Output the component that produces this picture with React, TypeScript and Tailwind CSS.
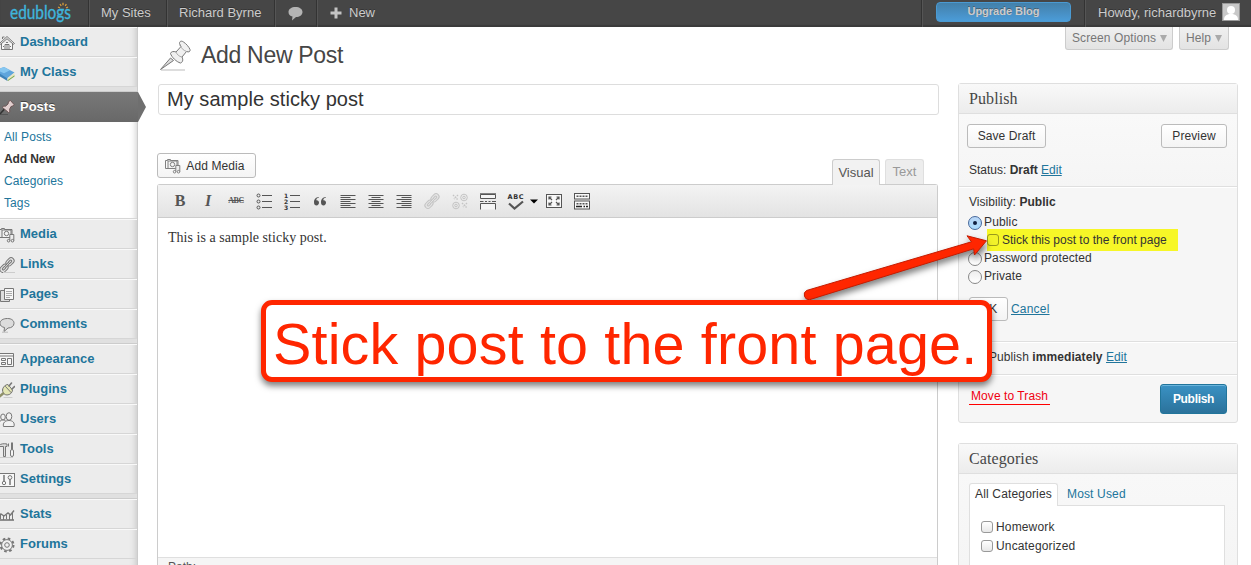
import type { ReactNode } from 'react';

type MenuIcon =
  | 'home'
  | 'book'
  | 'media'
  | 'link'
  | 'pages'
  | 'comment'
  | 'appearance'
  | 'plug'
  | 'users'
  | 'tools'
  | 'settings'
  | 'stats'
  | 'gear';

type MenuItem = { label: string; icon: MenuIcon };

const topMenu: MenuItem[] = [
  { label: 'Dashboard', icon: 'home' },
  { label: 'My Class', icon: 'book' },
];

const contentMenu: MenuItem[] = [
  { label: 'Media', icon: 'media' },
  { label: 'Links', icon: 'link' },
  { label: 'Pages', icon: 'pages' },
  { label: 'Comments', icon: 'comment' },
];

const adminMenu: MenuItem[] = [
  { label: 'Appearance', icon: 'appearance' },
  { label: 'Plugins', icon: 'plug' },
  { label: 'Users', icon: 'users' },
  { label: 'Tools', icon: 'tools' },
  { label: 'Settings', icon: 'settings' },
];

const extraMenu: MenuItem[] = [
  { label: 'Stats', icon: 'stats' },
  { label: 'Forums', icon: 'gear' },
];

const submenu = ['All Posts', 'Add New', 'Categories', 'Tags'];

function LinkShape() {
  return (
    <>
      <rect x="6.500" y="1.800" width="9" height="6" rx="3" transform="rotate(-45 11 4.800)" fill="#e4e4e4" />
      <rect x="0.500" y="8.300" width="9" height="6" rx="3" transform="rotate(-45 5 11.300)" fill="#e4e4e4" />
      <rect x="9" y="3.800" width="4" height="2" rx="1" transform="rotate(-45 11 4.800)" />
      <rect x="3" y="10.300" width="4" height="2" rx="1" transform="rotate(-45 5 11.300)" />
      <path d="M6 10.300l4-4.500" strokeWidth="2.400" />
      <path d="M6 10.300l4-4.500" stroke="#eee" strokeWidth="0.800" />
    </>
  );
}

function MediaShape() {
  return (
    <>
      <path d="M3.500 10.500h-3v-8h2v-1h3v1h7.500v6" />
      <rect x="3" y="3" width="9" height="7.500" fill="#f4f4f4" />
      <circle cx="7.500" cy="6.500" r="2.200" />
      <path d="M10.800 13.500V7.500h4v6" fill="#eee" />
      <circle cx="9.600" cy="13.700" r="1.300" />
      <circle cx="13.500" cy="13.700" r="1.300" />
    </>
  );
}

function SideIcon({ kind }: { kind: MenuIcon }) {
  const common = {
    width: 16,
    height: 16,
    viewBox: '0 0 16 16',
    fill: 'none',
    stroke: '#777',
    strokeWidth: 1,
    className: '-ml-px shrink-0',
  };
  switch (kind) {
    case 'home':
      return (
        <svg {...common}>
          <path d="M2.500 8v6.500h11V8" fill="#f7f7f7" />
          <path d="M.5 8.500L8 1.500l7.500 7-1.200.8L8 3.700 1.700 9.300z" fill="#eee" />
          <path d="M6 14V9.500h4V14M8 10v4M3.500 4V2h2" />
          <path d="M4 11.500h1M11 11.500h1M7 7.500h2" />
        </svg>
      );
    case 'book':
      return (
        <svg {...common} stroke="none">
          <path d="M0 6v5l8.500 5v-5z" fill="#3c82b8" />
          <path d="M0 4l5-2 10.500 5.500-7 6L0 8z" fill="#5fa5dc" />
          <path d="M1 3.500L5 2l6 3.200-6 3L0 6z" fill="#86c6f0" />
          <path d="M8.500 13l7-5.500v3l-7 5z" fill="#e9e6c4" />
          <path d="M8.500 15.200l7-5v1.300L9 16z" fill="#7aa94a" />
        </svg>
      );
    case 'media':
      return (
        <svg {...common}>
          <MediaShape />
        </svg>
      );
    case 'link':
      return (
        <svg {...common}>
          <LinkShape />
          <path d="M4 15.500h12" stroke="#ccc" />
        </svg>
      );
    case 'pages':
      return (
        <svg {...common}>
          <path d="M1.500 3.500h9v11h-9z" fill="#ddd" />
          <path d="M5.500 1.500h9v11h-9z" fill="#f7f7f7" />
          <path d="M7 4.500h6M7 6.500h6M7 8.500h6M7 10.500h4" stroke="#aaa" />
        </svg>
      );
    case 'comment':
      return (
        <svg {...common}>
          <path
            d="M8.500 1.500c4 0 6.500 2 6.500 4.800s-2.500 4.700-6 4.700L5 14.500l.5-4C3 10 1 8.800 1 6.300 1 3.500 4 1.500 8.500 1.500z"
            fill="#dcdcdc"
          />
          <path d="M3 15.200h6" stroke="#bbb" />
        </svg>
      );
    case 'appearance':
      return (
        <svg {...common}>
          <path d="M.5 1.500h14v13H.5z" fill="#f7f7f7" />
          <path d="M1 4h13" />
          <path d="M2.500 6.500h4v2h-4zM2.500 10.500h4v2h-4zM8.500 6.500h4v6h-4z" />
        </svg>
      );
    case 'plug':
      return (
        <svg {...common} strokeLinecap="round">
          <path d="M3.500 8c0-3 3-5.500 5.500-5.500L13.500 8c0 2.500-2.500 5-5.500 5-2.500 0-4.500-2-4.500-5z" fill="#e4e6b4" />
          <path d="M10 4l2.500-3M13 7l2.500-2.500" strokeWidth="1.600" />
          <path d="M4 11.500L0 15" stroke="#8f9168" strokeWidth="2.400" />
          <path d="M6.500 4.500l5.500 6" />
          <path d="M5 15.500h8" stroke="#ccc" />
        </svg>
      );
    case 'users':
      return (
        <svg {...common}>
          <ellipse cx="4" cy="5" rx="2.300" ry="3" fill="#f2f2f2" />
          <path d="M0 12c0-3 2-4 4-4s3 1 3 2" fill="#f2f2f2" />
          <ellipse cx="10" cy="4.500" rx="2.800" ry="3.800" fill="#f2f2f2" />
          <path d="M4.500 14.500c-1-4 2-6 5.500-6s6 2 5 6z" fill="#f2f2f2" />
        </svg>
      );
    case 'tools':
      return (
        <svg {...common}>
          <path d="M0 3.500c2-2 5-2 8-1.500v2.500H6.500v10h-2v-10H0" fill="#ddd" />
          <path d="M13 .5v7" strokeWidth="2" />
          <rect x="11.500" y="7.500" width="3" height="7" rx="1.500" fill="#f5f5f5" />
          <path d="M9.500 1.500v3" />
          <path d="M1 15.500h13" stroke="#ccc" />
        </svg>
      );
    case 'settings':
      return (
        <svg {...common}>
          <rect x=".5" y="1.500" width="15" height="13" fill="#f7f7f7" />
          <path d="M5 3v6M11 7v6" strokeWidth="1.500" />
          <circle cx="5" cy="11" r="1.700" />
          <circle cx="11" cy="5.500" r="1.900" />
        </svg>
      );
    case 'stats':
      return (
        <svg {...common}>
          <path d="M0 7.500l2-.5 3 2 4-3 2.500 2L15 3.500" strokeWidth="1.400" />
          <path d="M1.500 8v4M4.500 9v4M7.500 8v4M10.500 8v5M13.500 5v8" />
          <path d="M0 13h15" strokeWidth="1.600" />
        </svg>
      );
    case 'gear':
      return (
        <svg {...common}>
          <circle cx="8" cy="8" r="6.500" strokeWidth="2" strokeDasharray="2.600 2.500" />
          <circle cx="8" cy="8" r="5.400" fill="#f1f1f1" />
          <circle cx="8" cy="8" r="2.300" />
        </svg>
      );
  }
}

function MenuGroup({ items }: { items: MenuItem[] }) {
  return (
    <ul>
      {items.map((item) => (
        <li
          key={item.label}
          className="flex h-[30px] items-center border-t border-b border-t-[#f9f9f9] border-b-[#d6d6d6] text-[13px] font-bold text-[#21759b]"
        >
          <span className="flex w-[20px] pt-px">
            <SideIcon kind={item.icon} />
          </span>
          <span>{item.label}</span>
        </li>
      ))}
    </ul>
  );
}

function Separator() {
  return <div className="h-[5px] border-b border-[#ccc] bg-[#e0e0e0]" />;
}

function AdminBar() {
  return (
    <header className="flex h-[27px] shrink-0 bg-[#464646] text-[13px] leading-[25px] text-[#ccc] shadow-[inset_0_-2px_1px_#3a3a3a] [text-shadow:0_-1px_0_#333]">
      <svg width="88" height="27" className="shrink-0 [text-shadow:none]">
        <text
          x="10"
          y="18.500"
          fill="#3fb5dd"
          stroke="#3fb5dd"
          strokeWidth="0.400"
          fontFamily="Lato, sans-serif"
          fontSize="20"
          textLength="61"
          lengthAdjust="spacingAndGlyphs"
        >
          edublogs
        </text>
        <path
          d="M58 7l2 1M60 4l1.200 2M63 2.800v2.400M66.300 4L65.300 6M68 7l-2 1"
          fill="none"
          stroke="#d99c3c"
          strokeWidth="1.300"
        />
      </svg>
      <div className="w-[78px] border-l border-[#333] pl-[12px] shadow-[inset_1px_0_#555]">My Sites</div>
      <div className="w-[108px] border-l border-[#333] pl-[12px] shadow-[inset_1px_0_#555]">Richard Byrne</div>
      <div className="w-[42px] border-l border-[#333] pt-[6px] pl-[13px] shadow-[inset_1px_0_#555]">
        <svg width="15" height="15" fill="#b4b4b4">
          <path d="M7.500 1C11.500 1 14.500 3 14.500 6s-3 5-6.500 5L4 14.500 4.500 10.500C2 10 .5 8.500.5 6 .5 3 3.500 1 7.500 1z" />
        </svg>
      </div>
      <div className="flex border-l border-[#333] pl-[13px] shadow-[inset_1px_0_#555]">
        <svg className="mt-[7px] mr-[7px]" width="12" height="12" fill="#c4c4c4">
          <path d="M4.500.5h3v4h4v3h-4v4h-3v-4h-4v-3h4z" />
        </svg>
        New
      </div>
      <div className="ml-auto w-[163px] border-l border-[#333] pt-[2px] pl-[14px] shadow-[inset_1px_0_#555]">
        <div className="h-[20px] w-[135px] rounded-[4px] border border-[#4a9ad2] bg-linear-to-b from-[#4380aa] to-[#4b9cd8] text-center text-[11px] leading-[17px] font-bold [text-shadow:0_-1px_0_#4a6070]">
          Upgrade Blog
        </div>
      </div>
      <div className="flex w-[167px] border-l border-[#333] pl-[13px] shadow-[inset_1px_0_#555]">
        <span className="w-[124px] whitespace-nowrap">Howdy, richardbyrne</span>
        <svg className="mt-[3px]" width="18" height="18">
          <rect width="18" height="18" fill="#999" />
          <rect x="1" y="1" width="16" height="16" fill="#c8c8c8" />
          <circle cx="9" cy="7" r="4" fill="#fff" />
          <path d="M2 17c0-4 2-5 5-6h4c3 1 5 2 5 6z" fill="#fff" />
        </svg>
      </div>
    </header>
  );
}

function Sidebar() {
  return (
    <nav className="w-[138px] shrink-0 border-r border-[#ccc] bg-[#ececec] [box-shadow:inset_-7px_0_6px_-6px_#c4c4c4]">
      <MenuGroup items={topMenu} />
      <Separator />
      <div className="relative flex h-[30px] w-[138px] items-center bg-linear-to-b from-[#787878] to-[#686868] text-[13px] font-bold text-white [text-shadow:0_-1px_0_#444]">
        <svg className="mr-[5px] -ml-px" width="16" height="16" fill="none" stroke="#333">
          <path d="M.5 15.500l5-5.500" strokeWidth="1.600" />
          <path d="M9.500 2.500l2-1 3.500 4-1 1.500-2 .5-1.500 3 .5 2-1.500 1-6-5 1-1.500 2 .2 2.500-2.200z" fill="#e2cfcf" stroke="#6b5555" />
          <path d="M2 15.500h7" stroke="#555" />
        </svg>
        <span>Posts</span>
        <svg className="absolute top-0 left-[138px]" width="8" height="30">
          <path d="M0 0l8 15-8 15z" fill="#6f6f6f" />
        </svg>
      </div>
      <ul className="h-[97px] border-b border-[#d6d6d6] bg-white pt-[4px] pl-[4px] text-[12px] leading-[22px] text-[#21759b] [box-shadow:inset_-7px_0_6px_-6px_#ccc]">
        {submenu.map((label) => (
          <li key={label} className={label === 'Add New' ? 'font-bold tracking-[-0.1px] text-[#333]' : 'tracking-[0.1px]'}>
            {label}
          </li>
        ))}
      </ul>
      <MenuGroup items={contentMenu} />
      <Separator />
      <MenuGroup items={adminMenu} />
      <Separator />
      <MenuGroup items={extraMenu} />
    </nav>
  );
}

function ToolIcon({ children, faded }: { children: ReactNode; faded?: boolean }) {
  return (
    <span className="flex w-[28px] shrink-0 justify-center">
      <svg
        width="16"
        height="17"
        viewBox="0 0 16 17"
        fill="none"
        stroke={faded ? '#c4c4c4' : '#555'}
        strokeWidth="1"
        className="shrink-0 overflow-visible"
      >
        {children}
      </svg>
    </span>
  );
}

function Toolbar() {
  return (
    <div className="flex h-[33px] items-center border-b border-[#ccc] bg-linear-to-b from-[#f3f3f3] to-[#e3e3e3] pl-[8px] text-[#555]">
      <span className="w-[28px] text-center font-[Liberation_Serif,serif] text-[16px] leading-[16px] font-bold">B</span>
      <span className="w-[28px] text-center font-[Liberation_Serif,serif] text-[16px] leading-[16px] font-bold italic">I</span>
      <span className="w-[28px] text-center font-[Liberation_Serif,serif] text-[8px] font-bold tracking-[-0.5px] line-through">
        ABC
      </span>
      <ToolIcon>
        <path d="M6 2.500h10M6 8.500h10M6 14.500h10" />
        <circle cx="2.500" cy="2.500" r="1.500" />
        <circle cx="2.500" cy="8.500" r="1.500" />
        <circle cx="2.500" cy="14.500" r="1.500" />
      </ToolIcon>
      <ToolIcon>
        <path d="M6 2.500h10M6 8.500h10M6 14.500h10" />
        <g fill="#333" stroke="none" fontSize="6" fontWeight="bold" fontFamily="DejaVu Sans, sans-serif">
          <text x="0" y="4.500">1</text>
          <text x="0" y="10.500">2</text>
          <text x="0" y="16.500">3</text>
        </g>
      </ToolIcon>
      <ToolIcon>
        <g fill="#555" stroke="none">
          <path d="M7 4.500C5 5 4.300 6 4.300 7.200 6 7 7 8 7 9.600S6 12.500 4.500 12.500 2 11.300 2 9.200C2 6.500 3.500 4.300 7 4z" />
          <path d="M14 4.500c-2 .5-2.700 1.500-2.700 2.700 1.700-.2 2.700.8 2.700 2.400s-1 2.900-2.500 2.900S9 11.300 9 9.200C9 6.500 10.500 4.300 14 4z" />
        </g>
      </ToolIcon>
      <ToolIcon>
        <path d="M.5 2.500h15M.5 4.500h10M.5 6.500h15M.5 8.500h10M.5 10.500h15M.5 12.500h10M.5 14.500h15" />
      </ToolIcon>
      <ToolIcon>
        <path d="M.5 2.500h15M3.500 4.500h9M.5 6.500h15M3.500 8.500h9M.5 10.500h15M3.500 12.500h9M.5 14.500h15" />
      </ToolIcon>
      <ToolIcon>
        <path d="M.5 2.500h15M5.500 4.500h10M.5 6.500h15M5.500 8.500h10M.5 10.500h15M5.500 12.500h10M.5 14.500h15" />
      </ToolIcon>
      <ToolIcon faded>
        <LinkShape />
      </ToolIcon>
      <ToolIcon faded>
        <circle cx="12" cy="4.500" r="3.300" />
        <circle cx="12" cy="4.500" r="1.300" />
        <circle cx="4" cy="12.500" r="3.300" />
        <circle cx="4" cy="12.500" r="1.300" />
        <path d="M1 2l5 5M6 2L2 6M10 10l5 5M15 10l-4 4" strokeWidth="1.400" strokeDasharray="1.500 1" />
      </ToolIcon>
      <ToolIcon>
        <path d="M.5 1.500v4h15v-4zM.5 16.500v-6h15v6" fill="#f4f4f4" />
        <path d="M0 .8h16M0 8.500h3.500M5 8.500h2M8.500 8.500h2M12 8.500h4" />
      </ToolIcon>
      <span className="flex w-[38px] shrink-0 items-center">
        <ToolIcon>
          <text x="-.5" y="6" fill="#333" stroke="none" fontSize="6.500" fontWeight="bold" fontFamily="DejaVu Sans, sans-serif" textLength="16">
            ABC
          </text>
          <path d="M1 10.500l5.500 5 8.500-7" strokeWidth="2.200" />
        </ToolIcon>
        <svg width="8" height="5" className="shrink-0">
          <path d="M0 .5h8l-4 4z" fill="#000" />
        </svg>
      </span>
      <ToolIcon>
        <rect x=".5" y="1.500" width="15" height="13" fill="#f8f8f8" />
        <path d="M3 6.500V4h2.500M3 4l3 3M13 6.500V4h-2.500M13 4l-3 3M3 9.500V12h2.500M3 12l3-3M13 9.500V12h-2.500M13 12l-3-3" strokeWidth="1.200" />
      </ToolIcon>
      <ToolIcon>
        <rect x=".5" y=".5" width="15" height="5.500" fill="#fafafa" />
        <path d="M2.500 3.200h11" strokeWidth="1.500" strokeDasharray="2 1" />
        <rect x=".5" y="8" width="15" height="8" fill="#fafafa" />
        <path d="M2.500 10.700h11" strokeWidth="1.500" strokeDasharray="2 1" />
        <path d="M2 13.500h6M9.500 13.500h1.500M12 13.500h2" stroke="#222" strokeWidth="1.600" />
      </ToolIcon>
    </div>
  );
}

function Button({ children, className }: { children: ReactNode; className: string }) {
  return (
    <span
      className={`flex items-center justify-center rounded-[3px] border border-[#bbb] bg-linear-to-b from-white to-[#f4f4f4] text-[12px] whitespace-nowrap text-[#333] ${className}`}
    >
      {children}
    </span>
  );
}

function Editor() {
  return (
    <main className="flex w-[781px] shrink-0 flex-col">
      <div className="flex h-[57px] items-center pl-[3px]">
        <svg width="32" height="32" viewBox="0 0 32 32" fill="none" stroke="#777" className="shrink-0">
          <path d="M1 30h24" stroke="#bbb" />
          <path d="M.5 29.500L10.500 18l3 2.500z" fill="#ddd" />
          <path
            d="M19.500 3.500c0-2.500 2-3 4-1.500 2.500 1.500 5.500 5 6.500 7.500.5 2-1 3-3.500 2l-4.500 5.500c1.500 3 .5 5.500-1.500 6-4-1-9-6-10-9.500.5-2 3-2.500 5.500-1.500l5-5.500z"
            fill="#f0f0f0"
          />
          <path d="M19.500 4.500c1 3 4 6 7 7M16 12c1 2.500 3 4.500 6 5" stroke="#aaa" />
        </svg>
        <h1 className="ml-[9px] text-[23px] tracking-[-0.3px] text-[#464646]">Add New Post</h1>
      </div>
      <div className="-mr-px ml-px flex h-[31px] items-center rounded-[3px] border border-[#ddd] bg-white pb-[2px] pl-[8px] text-[20px] tracking-[0.05px] text-[#333]">
        My sample sticky post
      </div>
      <div className="flex h-[69px] items-end justify-between">
        <Button className="mb-[6px] h-[25px] w-[99px]">
          <svg width="16" height="16" viewBox="0 0 16 16" fill="none" stroke="#808080" className="mr-[5px] -ml-[3px]">
            <MediaShape />
          </svg>
          <span className="tracking-[0.1px]">Add Media</span>
        </Button>
        <div className="mr-[14px] flex items-end gap-[5px] text-[13px]">
          <span className="relative z-10 -mb-px flex h-[26px] w-[48px] items-center justify-center rounded-t-[3px] border border-b-0 border-[#ccc] bg-[#f2f2f2] text-[#555]">
            Visual
          </span>
          <span className="flex h-[25px] w-[39px] items-center justify-center rounded-t-[3px] border border-b-0 border-[#dfdfdf] bg-[#ededed] text-[#999]">
            Text
          </span>
        </div>
      </div>
      <div className="flex min-h-0 flex-1 flex-col rounded-t-[3px] border border-b-0 border-[#ccc]">
        <Toolbar />
        <div className="flex-1 bg-white pt-[10px] pl-[10px] font-[Liberation_Serif,serif] text-[14px] leading-[19px] tracking-[0.03px] text-[#333]">
          This is a sample sticky post.
        </div>
        <div className="h-[8px] overflow-hidden border-t border-[#dfdfdf] bg-[#f5f5f5] pl-[10px] text-[12px] leading-[18px] text-[#555]">
          Path:
        </div>
      </div>
    </main>
  );
}

function Radio({ checked }: { checked?: boolean }) {
  return (
    <span
      className={`mt-[3px] mr-[2px] flex size-[14px] shrink-0 items-center justify-center rounded-full border ${
        checked
          ? 'border-[#47699c] bg-linear-to-b from-[#b9d6f6] to-[#a9dcff]'
          : 'border-[#888] bg-linear-to-b from-[#eee] to-white'
      }`}
    >
      {checked && <span className="size-[4px] rounded-full bg-[#102040]" />}
    </span>
  );
}

function BoxTitle({ children }: { children: string }) {
  return (
    <h3 className="flex h-[30px] items-center border-b border-[#dfdfdf] bg-linear-to-b from-[#f9f9f9] to-[#ececec] pl-[10px] font-[Liberation_Serif,serif] text-[16px] tracking-[0.1px] text-[#464646]">
      {children}
    </h3>
  );
}

function PublishBox() {
  return (
    <section className="h-[340px] shrink-0 rounded-[3px] border border-[#dfdfdf] bg-[#f6f6f6] text-[12px] text-[#333]">
      <BoxTitle>Publish</BoxTitle>
      <div className="h-[73px] border-b border-[#dfdfdf] bg-linear-to-b from-[#f9f9f9] to-[#f5f5f5] pt-[10px] pr-[10px] pl-[8px]">
        <div className="flex justify-between">
          <Button className="h-[24px] w-[79px] tracking-[0.1px]">Save Draft</Button>
          <Button className="h-[24px] w-[66px] tracking-[0.1px]">Preview</Button>
        </div>
        <p className="mt-[13px] pl-[2px] leading-[18px]">
          Status: <b>Draft</b> <a className="text-[#21759b] underline">Edit</a>
        </p>
      </div>
      <div className="h-[155px] border-t border-b border-t-white border-b-[#dfdfdf] pl-[9px] leading-[18px]">
        <p className="pt-[5px] pl-px tracking-[0.05px]">
          Visibility: <b>Public</b>
        </p>
        <div className="mt-[2px] flex h-[18px] tracking-[0.15px]">
          <Radio checked />
          Public
        </div>
        <div className="my-[-2px] ml-[19px] flex h-[22px] w-[191px] items-center bg-[#f7f727] text-[#333]">
          <span className="mr-[3px] size-[12px] rounded-[3px] border border-[#99991c] bg-[#f2f22a]" />
          Stick this post to the front page
        </div>
        <div className="flex h-[18px] tracking-[0.1px]">
          <Radio />
          Password protected
        </div>
        <div className="flex h-[18px] tracking-[0.1px]">
          <Radio />
          Private
        </div>
        <div className="mt-[12px] flex items-center">
          <Button className="ml-px h-[24px] w-[39px]">OK</Button>
          <a className="ml-[3px] tracking-[0.2px] text-[#21759b] underline">Cancel</a>
        </div>
      </div>
      <p className="h-[33px] border-t border-b border-t-white border-b-[#dfdfdf] pt-[5px] pl-[30px] leading-[18px] tracking-[0.08px]">
        Publish <b>immediately</b> <a className="text-[#21759b] underline">Edit</a>
      </p>
      <div className="flex justify-between border-t border-white pt-[8px] pr-[10px] pl-[10px]">
        <a className="mt-[3px] h-[18px] border-b border-[#f00] px-[2px] leading-[18px] tracking-[0.07px] text-[#f00010]">Move to Trash</a>
        <span className="flex h-[30px] w-[67px] items-center justify-center rounded-[3px] border border-[#21759b] bg-linear-to-b from-[#3a92c4] to-[#2b729b] font-bold tracking-[-0.3px] text-white shadow-[inset_0_1px_0_#6ab4dc]">
          Publish
        </span>
      </div>
    </section>
  );
}

function CategoriesBox() {
  return (
    <section className="mt-[20px] min-h-0 flex-1 rounded-t-[3px] border border-b-0 border-[#dfdfdf] bg-linear-to-b from-[#f9f9f9] to-[#f5f5f5] text-[12px] tracking-[0.15px] text-[#333]">
      <BoxTitle>Categories</BoxTitle>
      <div className="flex h-[91px] flex-col pt-[9px] pr-[12px] pl-[10px]">
        <div className="flex">
          <span className="relative z-10 -mb-px flex h-[23px] w-[89px] items-center justify-center rounded-t-[3px] border border-b-0 border-[#dfdfdf] bg-white pb-[2px] whitespace-nowrap">
            All Categories
          </span>
          <span className="ml-[9px] flex h-[22px] items-center text-[#21759b]">Most Used</span>
        </div>
        <div className="flex-1 border border-b-0 border-[#dfdfdf] bg-white pt-[11px] pl-[11px]">
          {['Homework', 'Uncategorized'].map((name) => (
            <label key={name} className="flex h-[19px] items-center">
              <span className="mt-px mr-[3px] size-[12px] rounded-[3px] border border-[#999] bg-linear-to-b from-white to-[#e8e8e8]" />
              {name}
            </label>
          ))}
        </div>
      </div>
    </section>
  );
}

function ScreenTabs() {
  return (
    <div className="flex h-[23px] justify-end gap-[6px] pr-[22px] text-[12px] tracking-[0.1px] text-[#777]">
      {[
        { label: 'Screen Options', width: 'w-[108px]' },
        { label: 'Help', width: 'w-[50px]' },
      ].map((tab) => (
        <span
          key={tab.label}
          className={`flex h-[23px] items-center rounded-b-[3px] border border-t-0 border-[#ccc] bg-linear-to-b from-[#f0f0f0] to-[#e3e3e3] pl-[6px] whitespace-nowrap ${tab.width}`}
        >
          {tab.label}
          <svg width="7" height="7" className="ml-[4px]">
            <path d="M0 0h7L3.500 7z" fill="#aaa" />
          </svg>
        </span>
      ))}
    </div>
  );
}

function Callout() {
  return (
    <>
      <svg className="absolute top-[225px] left-[795px] drop-shadow-[1px_4px_3px_rgba(0,0,0,0.5)]" width="200" height="82">
        <path
          d="M11.500 65.500L176.500 16.800l-4.500-6L191.500 15.800 179.500 30l-.8-6.200L14.500 74.700a5 5 0 0 1-3-9.200z"
          fill="#ff2600"
          stroke="#c41c00"
          strokeWidth="1"
          strokeLinejoin="round"
        />
      </svg>
      <div className="absolute top-[300px] left-[261px] h-[82px] w-[731px] rounded-[11px] border-[5px] border-[#ff2600] bg-white pl-[7px] text-[57.5px] leading-[78px] tracking-[0.15px] whitespace-nowrap text-[#ff2600] shadow-[0_4px_6px_rgba(0,0,0,0.5)]">
        Stick post to the front page.
      </div>
    </>
  );
}

export default function App() {
  return (
    <div className="relative flex h-[565px] w-[1251px] flex-col overflow-hidden bg-white font-['Liberation_Sans',Arial,sans-serif]">
      <AdminBar />
      <div className="flex min-h-0 flex-1">
        <Sidebar />
        <div className="flex min-w-0 flex-1 pl-[19px]">
          <Editor />
          <aside className="flex min-w-0 flex-1 flex-col">
            <ScreenTabs />
            <div className="mt-[33px] mr-[13px] ml-[20px] flex min-h-0 flex-1 flex-col">
              <PublishBox />
              <CategoriesBox />
            </div>
          </aside>
        </div>
      </div>
      <Callout />
    </div>
  );
}
